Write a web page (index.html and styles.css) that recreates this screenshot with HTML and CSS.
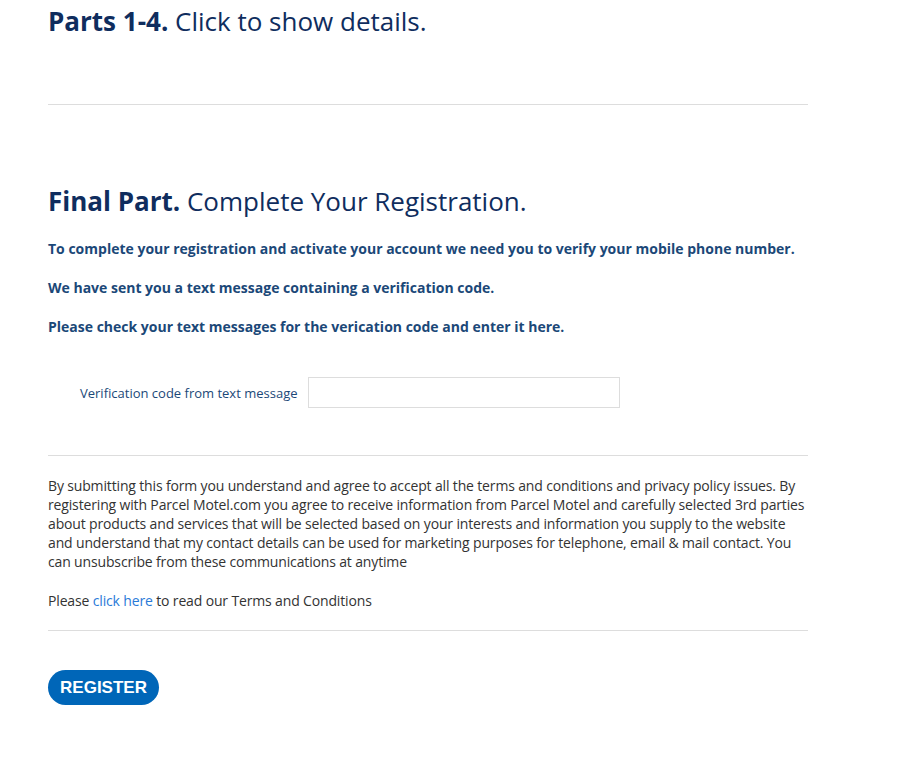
FILE: index.html
```html
<!DOCTYPE html>
<html lang="en">
<head>
    <meta charset="UTF-8">
    <meta name="viewport" content="width=device-width, initial-scale=1.0">
    <title>Register - Parcel Motel</title>
    <link rel="stylesheet" href="styles.css">
</head>
<body>
    <div class="register-wrap">
        <h2 class="part-title"><strong>Parts 1-4.</strong> Click to show details.</h2>
        <hr class="divider divider-top">

        <h2 class="part-title final-title"><strong>Final Part.</strong> Complete Your Registration.</h2>
        <p class="notice">To complete your registration and activate your account we need you to verify your mobile phone number.</p>
        <p class="notice">We have sent you a text message containing a verification code.</p>
        <p class="notice">Please check your text messages for the verication code and enter it here.</p>

        <div class="form-row">
            <label for="verify-code">Verification code from text message</label>
            <input type="text" id="verify-code" class="code-input">
        </div>

        <hr class="divider">

        <p class="terms">By submitting this form you understand and agree to accept all the terms and conditions and privacy policy issues. By registering with Parcel Motel.com you agree to receive information from Parcel Motel and carefully selected 3rd parties about products and services that will be selected based on your interests and information you supply to the website and understand that my contact details can be used for marketing purposes for telephone, email &amp; mail contact. You can unsubscribe from these communications at anytime</p>
        <p class="terms">Please <a href="#">click here</a> to read our Terms and Conditions</p>

        <hr class="divider divider-bottom">

        <button class="register-btn">REGISTER</button>
    </div>
</body>
</html>
```

FILE: styles.css
```css
body {
    margin: 0;
    background-color: #fff;
    font-family: "Open Sans", "Liberation Sans", Arial, sans-serif;
    color: #333;
}

.register-wrap {
    width: 760px;
    margin-left: 48px;
}

.part-title {
    margin: 0;
    font-size: 26px;
    line-height: 42px;
    font-weight: 400;
    color: #0f2d5e;
}

.part-title strong {
    font-weight: 700;
}

.final-title {
    margin-top: 75px;
    margin-bottom: 17px;
}

.divider {
    border: none;
    border-top: 1px solid #ddd;
    margin: 0;
}

.divider-top {
    margin-top: 62px;
}

.notice {
    margin: 0 0 20px;
    font-size: 14px;
    line-height: 19px;
    font-weight: 700;
    color: #1b4878;
}

.form-row {
    display: flex;
    align-items: center;
    gap: 10px;
    padding-left: 32px;
    margin-top: 41px;
    margin-bottom: 47px;
}

.form-row label {
    font-size: 13px;
    color: #1b4878;
}

.code-input {
    width: 312px;
    height: 31px;
    box-sizing: border-box;
    border: 1px solid #ddd;
    padding: 4px 8px;
    font-family: inherit;
}

.terms {
    margin: 20px 0;
    font-size: 14px;
    line-height: 19px;
    letter-spacing: -0.15px;
    color: #333;
}

.terms a {
    color: #2a7ad8;
    text-decoration: none;
}

.divider-bottom {
    margin-bottom: 39px;
}

.register-btn {
    display: block;
    width: 111px;
    height: 35px;
    border: none;
    border-radius: 18px;
    background-color: #0066b8;
    color: #fff;
    font-family: "Liberation Sans", Arial, sans-serif;
    font-size: 17px;
    font-weight: 700;
    cursor: pointer;
}
```
